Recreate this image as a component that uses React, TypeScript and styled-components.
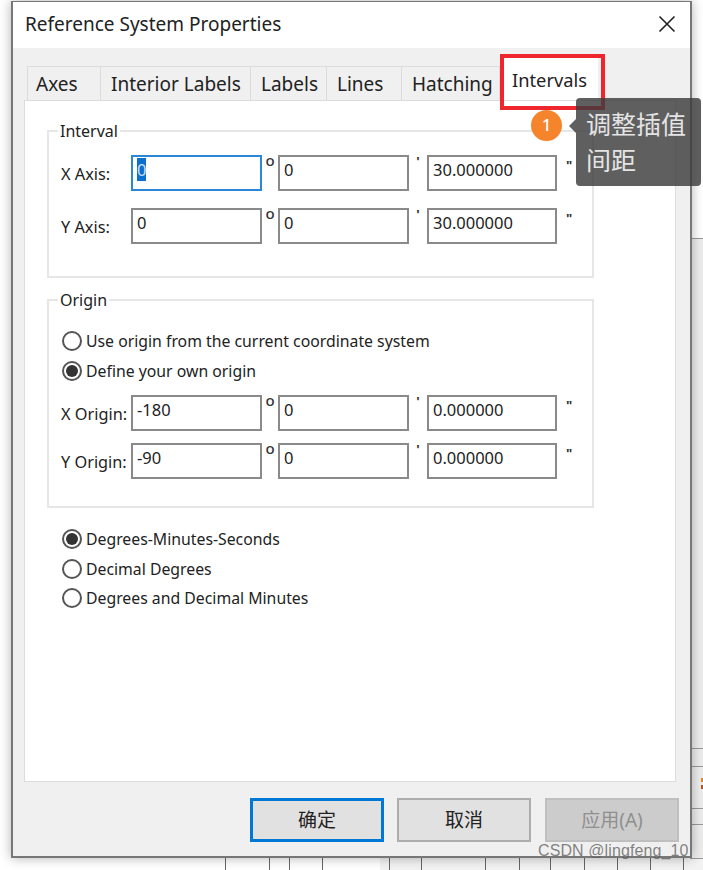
import styled, { createGlobalStyle } from 'styled-components';

const GlobalStyle = createGlobalStyle`
  html, body {
    margin: 0;
    padding: 0;
    background: #fff;
  }
`;

const SPage = styled.div`
  position: relative;
  width: 703px;
  height: 870px;
  overflow: hidden;
  padding: 1px 0 0 11px;
  box-sizing: border-box;
  font-family: 'Noto Sans', 'Noto Sans CJK SC', sans-serif;
  color: #222;
`;

const SBackdrop = styled.svg`
  position: absolute;
  inset: 0;
`;

const SDialog = styled.div`
  position: relative;
  width: 681px;
  height: 857px;
  box-sizing: border-box;
  border: 2px solid #777;
  border-top-width: 1px;
  background: #f0f0f0;
  box-shadow: 0 0 11px rgba(0, 0, 0, 0.3);
  display: flex;
  flex-direction: column;
`;

const STitleBar = styled.div`
  height: 46px;
  flex: none;
  box-sizing: border-box;
  background: #fff;
  display: flex;
  align-items: center;
  justify-content: space-between;
  padding: 0 14px 2px 12px;
  font-size: 19px;
`;

const SBody = styled.div`
  flex: 1;
  padding: 18px 11px 0 11px;
  display: flex;
  flex-direction: column;
`;

const STabs = styled.div`
  display: flex;
  height: 34px;
  margin-left: 3px;
`;

const STab = styled.div<{ $width: number }>`
  width: ${({ $width }) => $width}px;
  box-sizing: border-box;
  border: 1px solid #dcdcdc;
  border-bottom: none;
  border-left: none;
  background: #f0f0f0;
  font-size: 19px;
  padding-left: 10px;
  line-height: 34px;
  white-space: nowrap;

  &:first-child {
    border-left: 1px solid #dcdcdc;
    padding-left: 8px;
  }
`;

const SActiveTab = styled.div`
  width: 98px;
  height: 42px;
  margin-top: -8px;
  background: #fff;
  position: relative;
  z-index: 1;
  font-size: 18.3px;
  padding-left: 12px;
  line-height: 44px;
  box-sizing: border-box;
`;

const SPanel = styled.div`
  height: 682px;
  margin-right: 3px;
  box-sizing: border-box;
  border: 1px solid #dcdcdc;
  background: #fff;
  padding: 20px 0 0 22px;
`;

const SGroup = styled.fieldset<{ $gap?: number }>`
  width: 547px;
  box-sizing: border-box;
  margin: ${({ $gap }) => $gap ?? 0}px 0 0;
  border: 2px solid #e6e6e6;
  padding: 0 0 0 12px;
  min-inline-size: 0;
`;

const SLegend = styled.legend`
  margin-left: -3px;
  padding: 0 2px;
  font-size: 16px;
  line-height: 20px;
`;

const SFieldRows = styled.div<{ $top: number; $bottom: number; $gap: number }>`
  display: grid;
  grid-template-columns: 70px 131px 16px 131px 18px 130px 24px;
  grid-auto-rows: 36px;
  row-gap: ${({ $gap }) => $gap}px;
  margin: ${({ $top }) => $top}px 0 ${({ $bottom }) => $bottom}px;
`;

const SRowLabel = styled.div`
  font-size: 16.3px;
  line-height: 39px;
  white-space: nowrap;
`;

const SField = styled.div<{ $focused?: boolean }>`
  box-sizing: border-box;
  border: 2px solid ${({ $focused }) => ($focused ? '#2b86d8' : '#8a8a8a')};
  background: #fff;
  font-size: 16.5px;
  line-height: 26px;
  padding-left: 4px;
  white-space: nowrap;
`;

const SSelection = styled.span`
  background: #0a6fd0;
  color: #cfe0f2;
`;

const SUnit = styled.div<{ $kind: 'deg' | 'min' | 'sec' }>`
  text-align: center;
  font-weight: ${({ $kind }) => ($kind === 'deg' ? 500 : 700)};
  font-size: ${({ $kind }) => ($kind === 'deg' ? 15 : 13)}px;
  line-height: 10px;
  color: #333;
  padding-top: ${({ $kind }) => ($kind === 'min' ? 1 : $kind === 'sec' ? 5 : 0)}px;
`;

const SRadioRow = styled.div<{ $height?: number }>`
  display: flex;
  align-items: center;
  gap: 4px;
  height: ${({ $height }) => $height ?? 30}px;
  margin-left: 1px;
  font-size: 15.8px;
  white-space: nowrap;
`;

const SRadioDot = styled.span<{ $checked?: boolean }>`
  width: 20px;
  height: 20px;
  flex: none;
  box-sizing: border-box;
  border-radius: 50%;
  border: 2px solid #555;
  background: #fff;
  display: flex;
  align-items: center;
  justify-content: center;

  &::after {
    content: '';
    display: ${({ $checked }) => ($checked ? 'block' : 'none')};
    width: 12px;
    height: 12px;
    border-radius: 50%;
    background: #333;
  }
`;

const SOriginRadios = styled.div`
  margin-top: 16px;
`;

const SFormatRadios = styled.div`
  margin: 15px 0 0 14px;
`;

const SFooter = styled.div`
  display: flex;
  justify-content: flex-end;
  gap: 13px;
  margin-top: 16px;
`;

const SButton = styled.div<{ $variant?: 'primary' | 'disabled' }>`
  width: 134px;
  height: 44px;
  box-sizing: border-box;
  display: flex;
  align-items: center;
  justify-content: center;
  padding-bottom: 3px;
  font-size: 19px;
  margin-left: ${({ $variant }) => ($variant === 'disabled' ? 1 : 0)}px;
  background: ${({ $variant }) => ($variant === 'disabled' ? '#ccc' : '#e1e1e1')};
  color: ${({ $variant }) => ($variant === 'disabled' ? '#8f8f8f' : '#222')};
  border: ${({ $variant }) =>
    $variant === 'primary' ? '3px solid #0078d7' : $variant === 'disabled' ? '2px solid #bfbfbf' : '2px solid #adadad'};
`;

const SHighlight = styled.div`
  position: absolute;
  left: 487px;
  top: 52px;
  width: 105px;
  height: 56px;
  box-sizing: border-box;
  border: 4px solid #f0262e;
  z-index: 2;
`;

const SBadge = styled.div`
  position: absolute;
  left: 518px;
  top: 108px;
  width: 31px;
  height: 31px;
  border-radius: 50%;
  background: #f5842c;
  color: #fff;
  font-size: 17px;
  font-weight: 500;
  text-align: center;
  line-height: 30px;
  z-index: 3;
`;

const STooltip = styled.div`
  position: absolute;
  left: 563px;
  top: 96px;
  width: 125px;
  height: 88px;
  box-sizing: border-box;
  padding: 7px 0 0 10px;
  border-radius: 4px;
  background: rgba(60, 60, 60, 0.82);
  color: #e4e4e4;
  font-family: 'Noto Sans CJK SC', sans-serif;
  font-size: 25px;
  line-height: 36px;
  white-space: nowrap;
  z-index: 3;

  &::before {
    content: '';
    position: absolute;
    left: -7px;
    top: 21px;
    border: 7px solid transparent;
    border-left: none;
    border-right-color: rgba(60, 60, 60, 0.82);
  }
`;

const SWatermark = styled.div`
  position: absolute;
  left: 538px;
  top: 840px;
  font-family: 'Liberation Sans', sans-serif;
  font-size: 16px;
  line-height: 22px;
  letter-spacing: 0.1px;
  color: rgba(90, 90, 90, 0.75);
  white-space: nowrap;
`;

const gridX = [225, 269, 289, 322, 389, 421, 485, 519, 550, 584, 617, 650, 683];
const gridY = [238, 748, 766, 808, 824, 858];

function ValueRow({ label, values, focused }: { label: string; values: string[]; focused?: boolean }) {
  return (
    <>
      <SRowLabel>{label}</SRowLabel>
      <SField $focused={focused}>{focused ? <SSelection>{values[0]}</SSelection> : values[0]}</SField>
      <SUnit $kind='deg'>o</SUnit>
      <SField>{values[1]}</SField>
      <SUnit $kind='min'>'</SUnit>
      <SField>{values[2]}</SField>
      <SUnit $kind='sec'>"</SUnit>
    </>
  );
}

function RadioRow({ label, checked, height }: { label: string; checked?: boolean; height?: number }) {
  return (
    <SRadioRow $height={height}>
      <SRadioDot $checked={checked} />
      {label}
    </SRadioRow>
  );
}

export default function App() {
  return (
    <SPage>
      <GlobalStyle />
      <SBackdrop width='703' height='870'>
        <rect x='690' y='238' width='13' height='632' fill='#ededed' />
        <rect x='380' y='858' width='323' height='12' fill='#f2f2f2' />
        {gridX.map((x) => (
          <line key={x} x1={x + 0.5} x2={x + 0.5} y1='855' y2='870' stroke='#666' />
        ))}
        {gridY.map((y) => (
          <line key={y} x1='690' x2='703' y1={y + 0.5} y2={y + 0.5} stroke='#999' />
        ))}
        <rect x='701' y='778' width='2' height='4' fill='#d9892f' />
        <rect x='701' y='785' width='2' height='4' fill='#b3552a' />
      </SBackdrop>
      <SDialog>
        <STitleBar>
          Reference System Properties
          <svg width='18' height='18' viewBox='0 0 18 18'>
            <path d='M1.5 1.5 16.5 16.5M16.5 1.5 1.5 16.5' stroke='#222' strokeWidth='1.6' fill='none' />
          </svg>
        </STitleBar>
        <SBody>
          <STabs>
            <STab $width={74}>Axes</STab>
            <STab $width={150}>Interior Labels</STab>
            <STab $width={76}>Labels</STab>
            <STab $width={75}>Lines</STab>
            <STab $width={98}>Hatching</STab>
            <SActiveTab>Intervals</SActiveTab>
          </STabs>
          <SPanel>
            <SGroup>
              <SLegend>Interval</SLegend>
              <SFieldRows $top={14} $bottom={32} $gap={17}>
                <ValueRow label='X Axis:' values={['0', '0', '30.000000']} focused />
                <ValueRow label='Y Axis:' values={['0', '0', '30.000000']} />
              </SFieldRows>
            </SGroup>
            <SGroup $gap={12}>
              <SLegend>Origin</SLegend>
              <SOriginRadios>
                <RadioRow label='Use origin from the current coordinate system' />
                <RadioRow label='Define your own origin' checked />
              </SOriginRadios>
              <SFieldRows $top={9} $bottom={27} $gap={12}>
                <ValueRow label='X Origin:' values={['-180', '0', '0.000000']} />
                <ValueRow label='Y Origin:' values={['-90', '0', '0.000000']} />
              </SFieldRows>
            </SGroup>
            <SFormatRadios>
              <RadioRow label='Degrees-Minutes-Seconds' checked height={31} />
              <RadioRow label='Decimal Degrees' height={29} />
              <RadioRow label='Degrees and Decimal Minutes' />
            </SFormatRadios>
          </SPanel>
          <SFooter>
            <SButton $variant='primary'>确定</SButton>
            <SButton>取消</SButton>
            <SButton $variant='disabled'>应用(A)</SButton>
          </SFooter>
        </SBody>
        <SHighlight />
        <SBadge>1</SBadge>
        <STooltip>
          调整插值
          <br />
          间距
        </STooltip>
      </SDialog>
      <SWatermark>CSDN @lingfeng_10</SWatermark>
    </SPage>
  );
}
